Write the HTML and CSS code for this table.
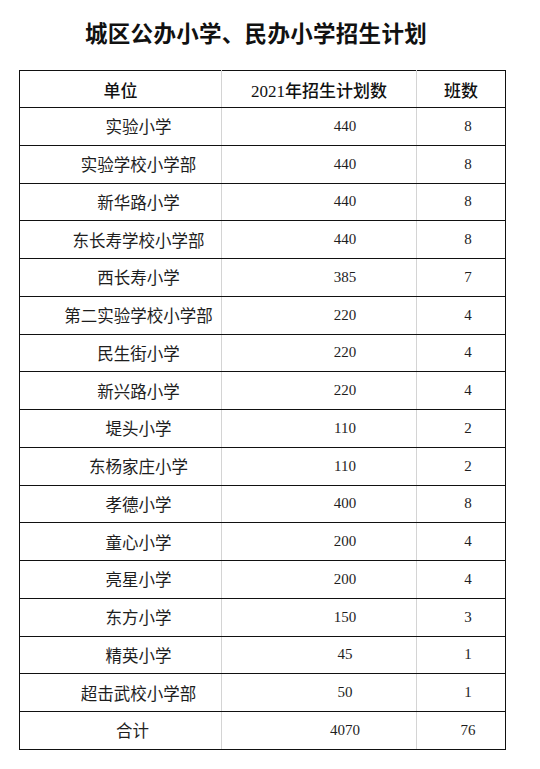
FILE: index.html
```html
<!DOCTYPE html>
<html lang="zh-CN">
<head>
<meta charset="utf-8">
<title>城区公办小学、民办小学招生计划</title>
<link rel="stylesheet" href="styles.css">
</head>
<body>
<div class="page">
  <h1 class="title">城区公办小学、民办小学招生计划</h1>
  <table class="plan">
    <colgroup>
      <col class="c1"><col class="c2"><col class="c3">
    </colgroup>
    <thead>
      <tr class="head">
        <th class="h1">单位</th>
        <th class="h2">2021年招生计划数</th>
        <th class="h3">班数</th>
      </tr>
    </thead>
    <tbody>
      <tr><td class="name">实验小学</td><td class="num">440</td><td class="cls">8</td></tr>
      <tr><td class="name">实验学校小学部</td><td class="num">440</td><td class="cls">8</td></tr>
      <tr><td class="name">新华路小学</td><td class="num">440</td><td class="cls">8</td></tr>
      <tr><td class="name">东长寿学校小学部</td><td class="num">440</td><td class="cls">8</td></tr>
      <tr><td class="name">西长寿小学</td><td class="num">385</td><td class="cls">7</td></tr>
      <tr><td class="name">第二实验学校小学部</td><td class="num">220</td><td class="cls">4</td></tr>
      <tr><td class="name">民生街小学</td><td class="num">220</td><td class="cls">4</td></tr>
      <tr><td class="name">新兴路小学</td><td class="num">220</td><td class="cls">4</td></tr>
      <tr><td class="name">堤头小学</td><td class="num">110</td><td class="cls">2</td></tr>
      <tr><td class="name">东杨家庄小学</td><td class="num">110</td><td class="cls">2</td></tr>
      <tr><td class="name">孝德小学</td><td class="num">400</td><td class="cls">8</td></tr>
      <tr><td class="name">童心小学</td><td class="num">200</td><td class="cls">4</td></tr>
      <tr><td class="name">亮星小学</td><td class="num">200</td><td class="cls">4</td></tr>
      <tr><td class="name">东方小学</td><td class="num">150</td><td class="cls">3</td></tr>
      <tr><td class="name">精英小学</td><td class="num">45</td><td class="cls">1</td></tr>
      <tr><td class="name">超击武校小学部</td><td class="num">50</td><td class="cls">1</td></tr>
      <tr><td class="name total">合计</td><td class="num">4070</td><td class="cls">76</td></tr>
    </tbody>
  </table>
</div>
</body>
</html>
```

FILE: styles.css
```css
html, body {
  margin: 0;
  padding: 0;
  background: #ffffff;
}

.page {
  width: 540px;
  height: 769px;
  padding-top: 18px;
  box-sizing: border-box;
}

.title {
  margin: 0;
  height: 52px;
  line-height: 28px;
  width: 512px;
  text-align: center;
  font-family: "Noto Sans CJK SC", sans-serif;
  font-weight: 700;
  font-size: 22.5px;
  letter-spacing: 0.3px;
  color: #111111;
}

.plan {
  margin-left: 19px;
  width: 486px;
  border-collapse: collapse;
  table-layout: fixed;
  border-left: 1px solid #111;
  border-right: 1px solid #111;
}

.c1 { width: 202px; }
.c2 { width: 195px; }
.c3 { width: 89px; }

.plan th,
.plan td {
  border-top: 1px solid #111;
  border-bottom: 1px solid #111;
  border-left: 1px solid #d4d4d4;
  border-right: 1px solid #d4d4d4;
  padding: 0;
  text-align: center;
  vertical-align: middle;
  color: #1e1e1e;
}

.plan th:first-child,
.plan td:first-child { border-left: 1px solid #111; }
.plan th:last-child,
.plan td:last-child { border-right: 1px solid #111; }

.head {
  height: 37px;
}

.plan th {
  font-family: "Liberation Serif", "Noto Sans CJK SC", serif;
  font-weight: 500;
  font-size: 17px;
  color: #111;
}

.h2 { padding-left: 12px; }
.h3 { padding-left: 14px; }

.plan tbody tr {
  height: 37.75px;
}

.name {
  font-family: "Noto Sans CJK SC", sans-serif;
  font-weight: 400;
  font-size: 16.5px;
  padding-left: 36px !important;
  color: #2a2a2a;
}

.name.total {
  padding-left: 24px !important;
}

.num,
.cls {
  font-family: "Liberation Serif", serif;
  font-size: 15px;
  color: #2a2a2a;
}

.num { padding-left: 52px !important; }
.cls { padding-left: 14px !important; }
```
